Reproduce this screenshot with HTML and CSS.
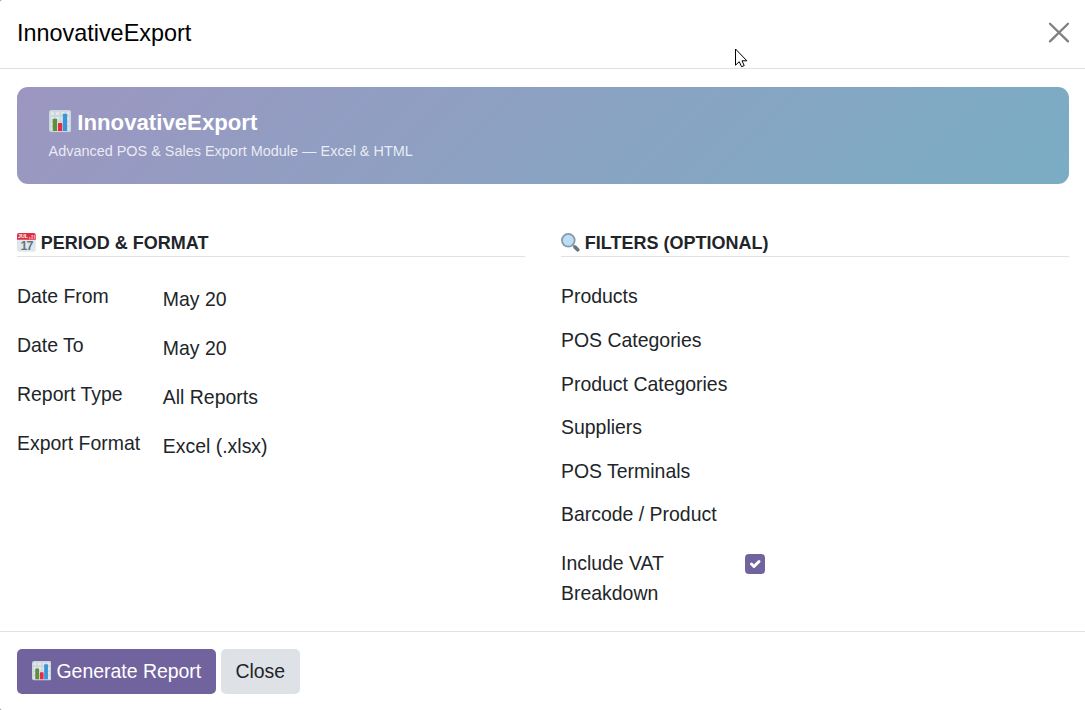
FILE: index.html
```
<!DOCTYPE html>
<html lang="en">
  <head>
    <meta charset="UTF-8" />
    <meta name="viewport" content="width=device-width, initial-scale=1.0" />
    <title>InnovativeExport</title>
    <link rel="stylesheet" href="styles.css">
  </head>
  <body>
    <!-- shared icons -->
    <svg class="defs" width="0" height="0">
      <symbol id="chart" viewBox="0 0 36 36">
        <rect width="36" height="36" rx="4" fill="#ccd6dd"/>
        <path fill="#e1e8ed" d="M3 3h5v5H3zM11 3h6v5h-6zM20 3h5v5h-5zM28 3h5v5h-5zM3 11h5v6H3zM11 11h6v6h-6zM20 11h5v6h-5zM28 11h5v6h-5zM3 20h5v5H3zM11 20h6v5h-6zM20 20h5v5h-5zM28 20h5v5h-5zM3 28h5v5H3zM11 28h6v5h-6zM20 28h5v5h-5zM28 28h5v5h-5z"/>
        <path fill="#5c913b" d="M13 34H6V15a1 1 0 0 1 1-1h5a1 1 0 0 1 1 1z"/>
        <path fill="#3b94d9" d="M29.500 34h-7V7a1 1 0 0 1 1-1h5a1 1 0 0 1 1 1z"/>
        <path fill="#dd2e44" d="M21.500 34h-7V22a1 1 0 0 1 1-1h5a1 1 0 0 1 1 1z"/>
      </symbol>
    </svg>

    <div class="modal">
      <header class="modal-header">
        <h4>InnovativeExport</h4>
        <button class="btn-close" aria-label="Close">
          <svg viewBox="0 0 20 20"><path d="M1 .8l18 17.600M19 .8L1 18.400"/></svg>
        </button>
      </header>

      <main class="modal-body">
        <div class="banner">
          <h2><svg class="icon"><use href="#chart"/></svg> InnovativeExport</h2>
          <p>Advanced POS &amp; Sales Export Module — Excel &amp; HTML</p>
        </div>

        <div class="groups">
          <section class="group">
            <h3>
              <svg class="icon" viewBox="0 0 36 36">
                <path fill="#e0e7ec" d="M36 32a4 4 0 0 1-4 4H4a4 4 0 0 1-4-4V9h36z"/>
                <path fill="#dd2e44" d="M0 13V4a4 4 0 0 1 4-4h28a4 4 0 0 1 4 4v9z"/>
                <path fill="#f4abba" d="M23 8h3v3h-3zM27.500 8h3v3h-3zM32 8h3v3h-3zM27.500 4h3v3h-3zM32 4h3v3h-3z"/>
                <text x="2" y="10.500" class="cal-month">JUL</text>
                <text x="18" y="33" class="cal-day">17</text>
              </svg>
              PERIOD &amp; FORMAT
            </h3>
            <dl class="fields">
              <dt>Date From</dt><dd>May 20</dd>
              <dt>Date To</dt><dd>May 20</dd>
              <dt>Report Type</dt><dd>All Reports</dd>
              <dt>Export Format</dt><dd>Excel (.xlsx)</dd>
            </dl>
          </section>

          <section class="group">
            <h3>
              <svg class="icon" viewBox="0 0 36 36">
                <path stroke="#9aaab4" stroke-width="4" d="M21 21l5 5"/>
                <path stroke="#66757f" stroke-width="7" stroke-linecap="round" d="M27 27l5 5"/>
                <circle cx="14" cy="14" r="12.2" fill="#bbddf5" stroke="#8899a6" stroke-width="3.4"/>
              </svg>
              FILTERS (OPTIONAL)
            </h3>
            <div class="filters">
              <label>Products</label>
              <label>POS Categories</label>
              <label>Product Categories</label>
              <label>Suppliers</label>
              <label>POS Terminals</label>
              <label>Barcode / Product</label>
              <div class="vat">
                <label>Include VAT Breakdown</label>
                <span class="checkbox">
                  <svg viewBox="0 0 20 20"><path d="M6.500 10l2.500 2.500 5-5"/></svg>
                </span>
              </div>
            </div>
          </section>
        </div>
      </main>

      <footer class="modal-footer">
        <button class="btn btn-primary"><svg class="icon"><use href="#chart"/></svg> Generate Report</button>
        <button class="btn btn-secondary">Close</button>
      </footer>
    </div>

    <svg class="cursor" viewBox="0 0 13 20">
      <path d="M.5 1v16.200l3.700-3.500 2.400 5 2.600-1.100-2.200-4.800h4.900z"/>
    </svg>
  </body>
</html>
```
FILE: styles.css
```
* {
  box-sizing: border-box;
}
body {
  margin: 0;
  background-color: #7f7f7f;
  font-family: "Liberation Sans", Arial, sans-serif;
  font-size: 19.46px;
  line-height: 29.25px;
  color: #212529;
}
h2,
h3,
h4,
p,
dl,
dd {
  margin: 0;
}
.defs {
  position: absolute;
}
.modal {
  height: 710px;
  display: flex;
  flex-direction: column;
  background-color: #fff;
  border-radius: 2px 0 0 2px;
}
.modal-header {
  height: 69px;
  padding: 0 16px 2px 17px;
  display: flex;
  align-items: center;
  justify-content: space-between;
  border-bottom: 1px solid #dee2e6;
}
.modal-header h4 {
  font-size: 23.4px;
  font-weight: 400;
  line-height: 30px;
  color: #000;
}
.btn-close {
  width: 20px;
  height: 20px;
  padding: 0;
  border: none;
  background: none;
}
.btn-close svg {
  display: block;
  overflow: visible;
  fill: none;
  stroke: #7f7f7f;
  stroke-width: 2.3;
  stroke-linecap: round;
}
.modal-body {
  flex: 1;
  padding: 18px 16px 0 17px;
}
.icon {
  width: 1em;
  height: 1em;
  fill: none;
}

/* banner */
.banner {
  height: 97px;
  padding: 22px 32px;
  border-radius: 11px;
  background: linear-gradient(135deg, #9c96c1, #7aadc4);
  color: #fff;
}
.banner h2 {
  font-size: 22.2px;
  line-height: 27px;
}
.banner .icon {
  vertical-align: -2.5px;
}
.banner p {
  margin-top: 4px;
  margin-left: -0.5px;
  font-size: 14.45px;
  line-height: 22px;
  color: rgba(255, 255, 255, 0.82);
}

/* form columns */
.groups {
  display: grid;
  grid-template-columns: 1fr 1fr;
  column-gap: 36px;
  margin-top: 46px;
}
.group h3 {
  height: 27px;
  border-bottom: 1px solid #dee2e6;
  font-size: 18px;
  line-height: 26px;
}
.group h3 .icon {
  width: 18.8px;
  height: 18.8px;
  vertical-align: -3px;
}
.cal-month {
  font-size: 10px;
  font-weight: 700;
  fill: #fff;
}
.cal-day {
  font-size: 24px;
  font-weight: 700;
  text-anchor: middle;
  letter-spacing: -2px;
  fill: #66757f;
}
.fields {
  display: grid;
  grid-template-columns: 145.8px 1fr;
  grid-auto-rows: 49px;
  margin-top: 25px;
}
.fields dd {
  padding-top: 3px;
}
.filters {
  display: flex;
  flex-direction: column;
  gap: 14.3px;
  margin-top: 25.45px;
}
.vat {
  display: flex;
  margin-top: 4px;
}
.vat label {
  width: 150px;
  margin-right: 34px;
  line-height: 30px;
}
.checkbox {
  width: 20px;
  height: 20px;
  margin-top: 6px;
  border-radius: 4px;
  background-color: #71639e;
}
.checkbox svg {
  display: block;
  fill: none;
  stroke: #fff;
  stroke-width: 3;
  stroke-linecap: round;
  stroke-linejoin: round;
}

/* footer */
.modal-footer {
  height: 79px;
  padding: 17px;
  display: flex;
  align-items: flex-start;
  gap: 5px;
  border-top: 1px solid #dee2e6;
}
.btn {
  height: 45px;
  padding: 0 14.6px;
  border: none;
  border-radius: 5px;
  font: inherit;
}
.btn-primary {
  background-color: #71639e;
  color: #fff;
}
.btn-primary .icon {
  vertical-align: -3px;
}
.btn-secondary {
  background-color: #dee2e6;
  color: #212529;
}

.cursor {
  position: absolute;
  left: 735px;
  top: 48px;
  width: 13px;
  height: 20px;
  fill: #fff;
  stroke: #000;
}
```
